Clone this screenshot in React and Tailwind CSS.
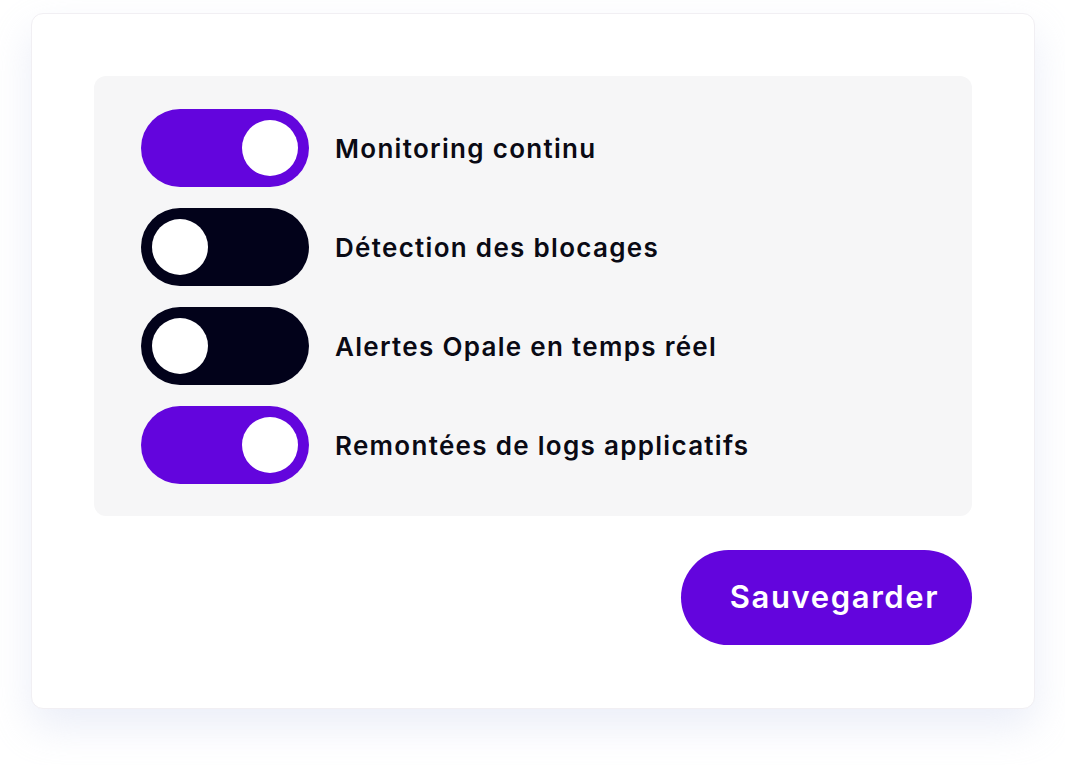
import React, { useState } from 'react'

const OPTIONS = [
  { id: 'monitoring', label: 'Monitoring continu', on: true },
  { id: 'blocages', label: 'Détection des blocages', on: false },
  { id: 'alertes', label: 'Alertes Opale en temps réel', on: false },
  { id: 'logs', label: 'Remontées de logs applicatifs', on: true }
]

function Toggle({ on, onClick }) {
  return (
    <button
      onClick={onClick}
      className={`flex items-center w-[168px] h-[78px] rounded-full px-[11px] shrink-0 ${
        on ? 'bg-[#6305dd] justify-end' : 'bg-[#02021a] justify-start'
      }`}
    >
      <span className="block w-[56px] h-[56px] rounded-full bg-white" />
    </button>
  )
}

export default function App() {
  const [opts, setOpts] = useState(OPTIONS)

  const flip = (id) =>
    setOpts((prev) => prev.map((o) => (o.id === id ? { ...o, on: !o.on } : o)))

  return (
    <div className="w-[1065px] h-[765px] bg-white pt-[13px] pl-[31px] font-['Inter',sans-serif]">
      <div className="w-[1004px] h-[696px] bg-white rounded-[12px] border border-[#f1eff3] shadow-[0_18px_40px_rgba(210,218,240,0.45)] p-[62px] flex flex-col">
        <div className="bg-[#f6f6f7] rounded-[12px] pt-[33px] pb-[32px] pl-[47px] flex flex-col gap-[21px]">
          {opts.map((o) => (
            <div key={o.id} className="flex items-center gap-[26px]">
              <Toggle on={o.on} onClick={() => flip(o.id)} />
              <span className="text-[26px] font-semibold text-[#0a0a14] tracking-[1.3px]">{o.label}</span>
            </div>
          ))}
        </div>
        <div className="flex justify-end mt-[34px]">
          <button className="w-[291px] h-[95px] rounded-full bg-[#6305dd] text-white text-[31px] font-semibold tracking-[1.6px] pl-[16px]">
            Sauvegarder
          </button>
        </div>
      </div>
    </div>
  )
}
